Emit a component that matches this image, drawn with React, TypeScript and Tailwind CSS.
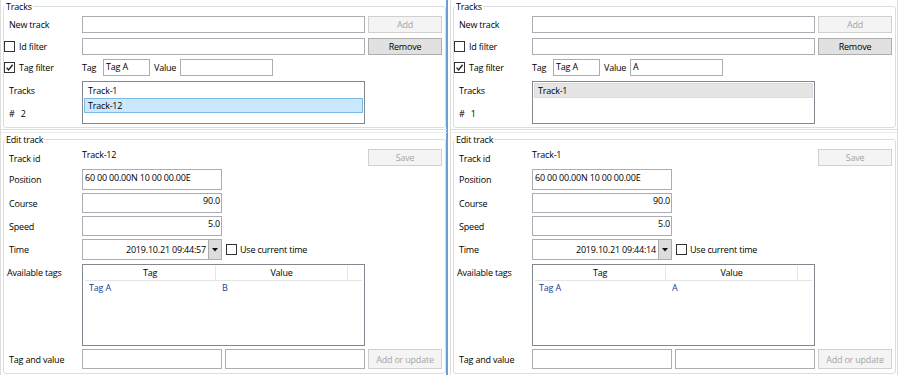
import clsx from "clsx";

type PaneData = {
  tagValue: string;
  tracks: string[];
  selected: string;
  focused: boolean;
  trackId: string;
  time: string;
  tagRow: [string, string];
};

const panes: PaneData[] = [
  {
    tagValue: "",
    tracks: ["Track-1", "Track-12"],
    selected: "Track-12",
    focused: true,
    trackId: "Track-12",
    time: "2019.10.21 09:44:57",
    tagRow: ["Tag A", "B"],
  },
  {
    tagValue: "A",
    tracks: ["Track-1"],
    selected: "Track-1",
    focused: false,
    trackId: "Track-1",
    time: "2019.10.21 09:44:14",
    tagRow: ["Tag A", "A"],
  },
];

function TextBox({ value = "", right, className }: { value?: string; right?: boolean; className?: string }) {
  return (
    <div
      className={clsx(
        "border border-[#abadb3] bg-white px-[2px] leading-[13px] whitespace-nowrap overflow-hidden",
        right && "text-right pr-[1px]",
        className
      )}
    >
      {value}
    </div>
  );
}

function Btn({ label, disabled, className }: { label: string; disabled?: boolean; className?: string }) {
  return (
    <button
      type="button"
      className={clsx(
        "flex items-center justify-center border leading-[13px]",
        disabled ? "border-[#d0d0d0] bg-[#f4f4f4] text-[#a6a6a6]" : "border-[#adadad] bg-[#e1e1e1] text-black",
        className
      )}
    >
      {label}
    </button>
  );
}

function Check({ checked }: { checked?: boolean }) {
  return (
    <span className="w-[11px] h-[11px] shrink-0 border border-[#333] bg-white flex items-center justify-center">
      {checked && (
        <svg viewBox="0 0 9 9" className="w-[9px] h-[9px]">
          <path d="M1.6 4.6 L3.6 6.9 L7.6 1.8" fill="none" stroke="#222" strokeWidth="1.4" />
        </svg>
      )}
    </span>
  );
}

function Pane({ data }: { data: PaneData }) {
  return (
    <div
      className={clsx(
        "h-[375px] border-l border-[#dedede] pl-[2px] flex flex-col",
        data.focused ? "w-[448px] border-r-2 border-r-[#6a9fd6]" : "w-[448px] border-r border-r-[#dedede]"
      )}
    >
      {/* Tracks */}
      <fieldset className="border border-[#d5dfe5] rounded-[3px] h-[128px] w-[443px] min-w-0 shrink-0">
        <legend className="ml-[1px] px-[1px] leading-[13px]">Tracks</legend>
        <div className="flex items-center mt-[3px] h-[17px]">
          <div className="w-[78px] pl-[5px]">New track</div>
          <TextBox className="w-[283px] h-full" />
          <Btn label="Add" disabled className="ml-[3px] w-[74px] h-full" />
        </div>
        <div className="flex items-center mt-[5px] h-[17px]">
          <div className="w-[78px] flex items-center gap-[4px]">
            <Check />
            <span>Id filter</span>
          </div>
          <TextBox className="w-[283px] h-full" />
          <Btn label="Remove" className="ml-[3px] w-[74px] h-full" />
        </div>
        <div className="flex items-center mt-[4px] h-[17px]">
          <div className="w-[78px] flex items-center gap-[4px]">
            <Check checked />
            <span>Tag filter</span>
          </div>
          <span className="w-[21px]">Tag</span>
          <TextBox value="Tag A" className="w-[47px] h-full" />
          <span className="ml-[4px] w-[26px]">Value</span>
          <TextBox value={data.tagValue} className="w-[93px] h-full" />
        </div>
        <div className="flex mt-[5px] h-[43px]">
          <div className="w-[78px] pl-[5px] flex flex-col">
            <span className="mt-[3px] leading-[13px]">Tracks</span>
            <span className="mt-[10px] leading-[13px] flex gap-[6px]">
              <span>#</span>
              <span>{data.tracks.length}</span>
            </span>
          </div>
          <div className="w-[283px] h-full border border-[#828790] bg-white p-[1px]">
            {data.tracks.map((t) => (
              <div
                key={t}
                className={clsx(
                  "h-[15px] pl-[3px] border leading-[13px]",
                  t !== data.selected && "border-transparent",
                  t === data.selected && data.focused && "bg-[#cce8ff] border-[#7ab8e6]",
                  t === data.selected && !data.focused && "bg-[#e5e5e5] border-[#dadada]"
                )}
              >
                {t}
              </div>
            ))}
          </div>
        </div>
      </fieldset>

      {/* Splitter */}
      <div className="h-[4px] -ml-[2px] w-[446px] border-t border-[#dcdcdc] border-b border-b-[#ececec] mt-[1px]" />

      {/* Edit track */}
      <fieldset className="border border-[#d5dfe5] rounded-[3px] h-[241px] w-[443px] min-w-0 shrink-0">
        <legend className="ml-[1px] px-[1px] leading-[13px]">Edit track</legend>
        <div className="flex items-start mt-[3px] h-[17px]">
          <div className="w-[78px] pl-[5px] mt-[3px] leading-[13px]">Track id</div>
          <div className="w-[286px] -mt-[1px] leading-[13px]">{data.trackId}</div>
          <Btn label="Save" disabled className="w-[74px] h-full" />
        </div>
        <div className="flex items-center mt-[3px] h-[21px]">
          <div className="w-[78px] pl-[5px]">Position</div>
          <TextBox value="60 00 00.00N 10 00 00.00E" className="w-[140px] h-full pt-[1px]" />
        </div>
        <div className="flex items-center mt-[3px] h-[20px]">
          <div className="w-[78px] pl-[5px]">Course</div>
          <TextBox value="90.0" right className="w-[140px] h-full" />
        </div>
        <div className="flex items-center mt-[3px] h-[20px]">
          <div className="w-[78px] pl-[5px]">Speed</div>
          <TextBox value="5.0" right className="w-[140px] h-full" />
        </div>
        <div className="flex items-center mt-[3px] h-[21px]">
          <div className="w-[78px] pl-[5px]">Time</div>
          <div className="w-[140px] h-full border border-[#abadb3] bg-white flex">
            <div className="flex-1 text-right pr-[2px] flex items-center justify-end">{data.time}</div>
            <div className="w-[13px] h-full bg-[#dddddd] border-l border-[#acacac] flex items-center justify-center">
              <svg viewBox="0 0 6 4" className="w-[6px] h-[4px]">
                <path d="M0 0 H6 L3 3.5 Z" fill="#111" />
              </svg>
            </div>
          </div>
          <div className="ml-[4px] flex items-center gap-[3px]">
            <Check />
            <span>Use current time</span>
          </div>
        </div>
        <div className="flex items-start mt-[4px] h-[82px]">
          <div className="w-[78px] pl-[3px] mt-[2px] leading-[13px]">Available tags</div>
          <div className="w-[283px] h-full border border-[#828790] bg-white px-[2px] pt-[1px]">
            <div className="flex h-[15px] border-b border-[#e5e5e5] leading-[13px]">
              <div className="w-[131px] text-center border-r border-[#e5e5e5]">Tag</div>
              <div className="w-[132px] text-center border-r border-[#e5e5e5]">Value</div>
              <div className="flex-1" />
            </div>
            <div className="flex text-[#263a8e] leading-[13px]">
              <div className="w-[132px] pl-[4px]">{data.tagRow[0]}</div>
              <div className="pl-[5px]">{data.tagRow[1]}</div>
            </div>
          </div>
        </div>
        <div className="flex items-center mt-[3px] h-[20px]">
          <div className="w-[78px] pl-[5px]">Tag and value</div>
          <TextBox className="w-[140px] h-full" />
          <TextBox className="ml-[3px] w-[140px] h-full" />
          <Btn label="Add or update" disabled className="ml-[3px] w-[74px] h-full" />
        </div>
      </fieldset>
    </div>
  );
}

export default function App() {
  return (
    <div className="w-[900px] h-[375px] bg-white flex font-['Open_Sans',sans-serif] text-[9px] tracking-[-0.2px] leading-[13px] text-black overflow-hidden">
      <Pane data={panes[0]} />
      <div className="w-[2px] shrink-0" />
      <Pane data={panes[1]} />
    </div>
  );
}
